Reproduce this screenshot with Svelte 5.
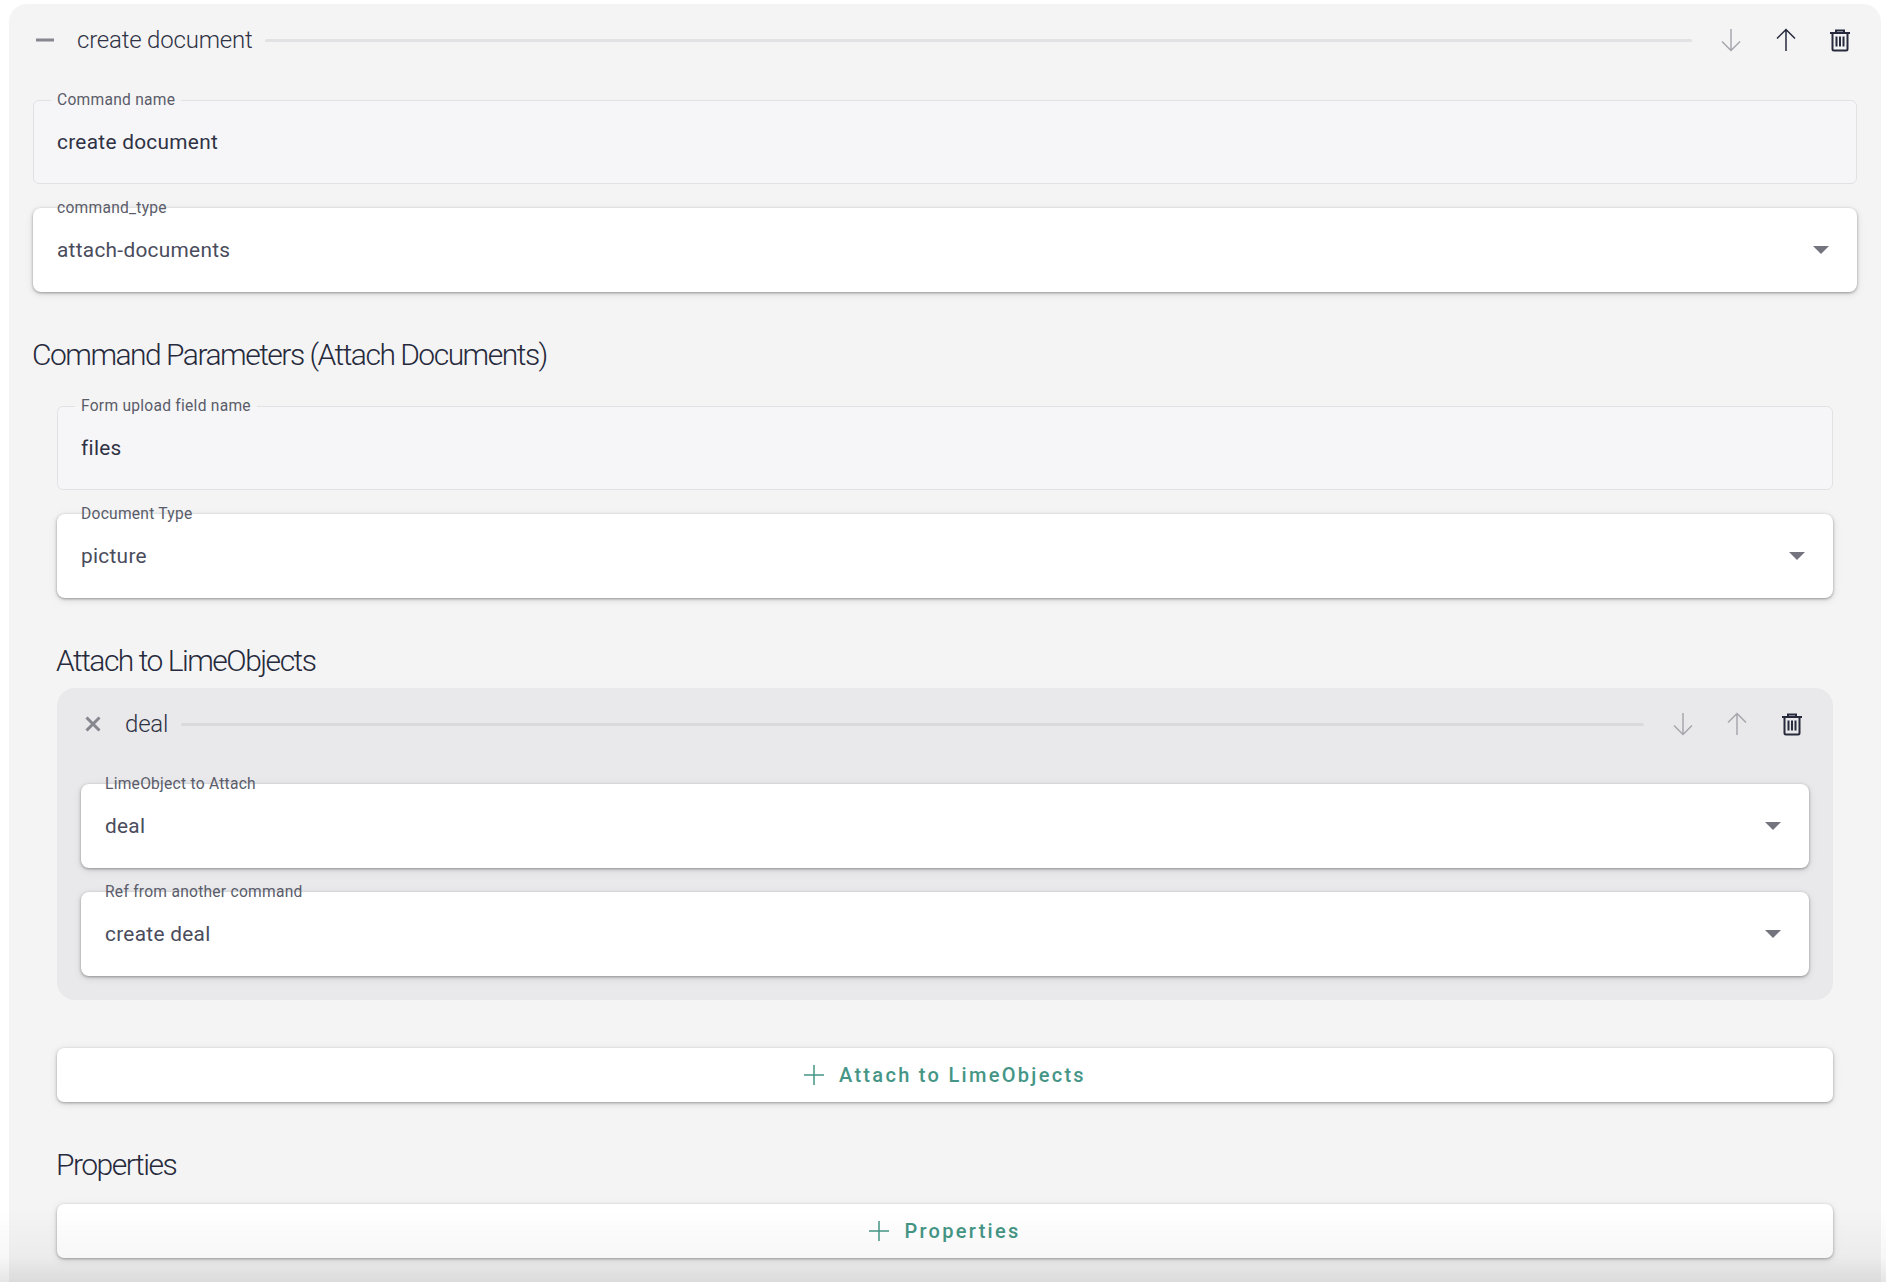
<script>
  const SELECT = "select";
</script>

{#snippet arrow(dir, off)}
  <button class="icon-btn" class:off aria-label={dir}>
    <svg width="24" height="24" viewBox="0 0 24 24" fill="none" stroke="currentColor" stroke-width="1.5">
      {#if dir === "up"}
        <path d="M12 23V1.5M3 10.5l9-9 9 9" />
      {:else}
        <path d="M12 1v21.5M3 13.5l9 9 9-9" />
      {/if}
    </svg>
  </button>
{/snippet}

{#snippet trash()}
  <button class="icon-btn" aria-label="delete">
    <svg width="24" height="24" viewBox="0 0 24 24" fill="none" stroke="currentColor" stroke-width="2">
      <path d="M2 5h20M8 5V2.5h8V5M4.5 5v16a1.5 1.5 0 0 0 1.5 1.5h12a1.5 1.5 0 0 0 1.5-1.5V5" />
      <path d="M8.5 8.5v10M12 8.5v10M15.5 8.5v10" />
    </svg>
  </button>
{/snippet}

{#snippet field(label, value, kind)}
  <div class="field" class:select={kind === SELECT}>
    <span class="label">{label}</span>
    <span class="value">{value}</span>
    {#if kind === SELECT}<span class="caret"></span>{/if}
  </div>
{/snippet}

{#snippet addButton(text)}
  <button class="add">
    <svg width="20" height="20" viewBox="0 0 20 20" fill="none" stroke="currentColor" stroke-width="1.5">
      <path d="M10 0v20M0 10h20" />
    </svg>
    <span>{text}</span>
  </button>
{/snippet}

<div class="panel">
  <header class="row-head">
    <button class="toggle" aria-label="collapse">
      <svg width="20" height="20" viewBox="0 0 20 20"><path d="M1 10h18" stroke="currentColor" stroke-width="3" /></svg>
    </button>
    <span class="title">create document</span>
    <span class="rule"></span>
    <div class="tools">
      {@render arrow("down", true)}
      {@render arrow("up", false)}
      {@render trash()}
    </div>
  </header>

  <div class="stack">
    {@render field("Command name", "create document", "input")}
    {@render field("command_type", "attach-documents", SELECT)}
  </div>

  <h2>Command Parameters (Attach Documents)</h2>

  <div class="nested">
    <div class="stack">
      {@render field("Form upload field name", "files", "input")}
      {@render field("Document Type", "picture", SELECT)}
    </div>

    <h2 class="sub">Attach to LimeObjects</h2>

    <section class="group">
      <header class="row-head">
        <button class="toggle" aria-label="remove">
          <svg width="20" height="20" viewBox="0 0 20 20"><path d="M3.5 3.5l13 13M16.5 3.5l-13 13" stroke="currentColor" stroke-width="3" /></svg>
        </button>
        <span class="title">deal</span>
        <span class="rule"></span>
        <div class="tools">
          {@render arrow("down", true)}
          {@render arrow("up", true)}
          {@render trash()}
        </div>
      </header>
      <div class="stack">
        {@render field("LimeObject to Attach", "deal", SELECT)}
        {@render field("Ref from another command", "create deal", SELECT)}
      </div>
    </section>

    {@render addButton("Attach to LimeObjects")}

    <h2 class="sub props">Properties</h2>

    {@render addButton("Properties")}
  </div>
</div>
<div class="fade"></div>

<style>
  :global(body) {
    margin: 0;
    background: #fff;
    height: 1282px;
    overflow: hidden;
    font-family: Roboto, "Liberation Sans", sans-serif;
    color: #262a3c;
  }
  .panel {
    margin: 4px 5px 0 9px;
    padding: 0 24px;
    height: 1278px;
    box-sizing: border-box;
    background: #f4f4f4;
    border-radius: 18px 18px 0 0;
  }
  .row-head {
    display: flex;
    align-items: center;
    height: 72px;
  }
  .toggle {
    all: unset;
    display: flex;
    width: 20px;
    height: 20px;
    margin: 0 22px 0 2px;
    color: #86868f;
  }
  .title {
    font-size: 24px;
    font-weight: 300;
    letter-spacing: -0.2px;
    color: #2f3244;
  }
  .rule {
    flex: 1;
    height: 3px;
    margin: 0 0 0 13px;
    border-radius: 2px;
    background: #e2e2e4;
  }
  .group .rule {
    background: #dadade;
  }
  .tools {
    display: flex;
    gap: 30px;
    margin: 0 5px 0 28px;
  }
  .icon-btn {
    all: unset;
    display: flex;
    width: 24px;
    height: 24px;
    color: #262a3c;
  }
  .icon-btn.off {
    color: #a6a6ae;
    transform: translateX(-1px);
  }
  .stack {
    display: flex;
    flex-direction: column;
    gap: 24px;
    padding-top: 24px;
  }
  .field {
    position: relative;
    display: flex;
    align-items: center;
    justify-content: space-between;
    height: 84px;
    box-sizing: border-box;
    padding: 0 28px 0 23px;
    border: 1px solid #e2e2e5;
    border-radius: 6px;
    background: #f6f6f8;
  }
  .field.select {
    border: 0;
    padding-left: 24px;
    background: #fff;
    box-shadow: 0 1px 3px rgba(0, 0, 0, 0.36), 0 2px 8px rgba(0, 0, 0, 0.1);
    border-radius: 8px;
  }
  .label {
    position: absolute;
    left: 17px;
    top: -11px;
    padding: 0 6px;
    font-size: 15.6px;
    line-height: 20px;
    letter-spacing: 0.25px;
    color: #5a5c6a;
    background: linear-gradient(#f4f4f4 55%, transparent 55%);
  }
  .field.select .label {
    padding: 0;
    left: 24px;
    top: -10px;
    background: none;
  }
  .value {
    font-size: 20.8px;
    letter-spacing: 0.3px;
    color: #4a4c5c;
  }
  .field:not(.select) .value {
    color: #2f3244;
  }
  .caret {
    width: 0;
    height: 0;
    border-left: 8px solid transparent;
    border-right: 8px solid transparent;
    border-top: 8px solid #74747f;
  }
  h2 {
    margin: 0 0 0 -1px;
    padding: 45px 0 0;
    height: 69px;
    font-size: 30px;
    line-height: 36px;
    font-weight: 300;
    letter-spacing: -1.5px;
    color: #262a3c;
  }
  h2.sub {
    height: 45px;
    padding-top: 45px;
  }
  h2.props {
    padding-top: 45px;
    height: 57px;
  }
  .nested {
    padding: 0 24px;
  }
  .nested > .stack {
    padding-top: 0;
  }
  .group {
    padding: 0 24px 24px;
    border-radius: 18px;
    background: #e9e9eb;
  }
  .add {
    all: unset;
    box-sizing: border-box;
    display: flex;
    align-items: center;
    justify-content: center;
    gap: 15px;
    width: 100%;
    height: 54px;
    margin-top: 48px;
    border-radius: 7px;
    background: #fff;
    box-shadow: 0 1px 3px rgba(0, 0, 0, 0.32), 0 2px 8px rgba(0, 0, 0, 0.1);
    color: #459686;
    font-size: 20px;
    font-weight: 500;
    letter-spacing: 2.3px;
  }
  .props + .add {
    margin-top: 0;
  }
  .fade {
    position: fixed;
    left: 0;
    right: 0;
    bottom: 0;
    height: 72px;
    background: linear-gradient(rgba(0, 0, 0, 0), rgba(0, 0, 0, 0.03) 65%, rgba(0, 0, 0, 0.1));
    pointer-events: none;
  }
</style>
